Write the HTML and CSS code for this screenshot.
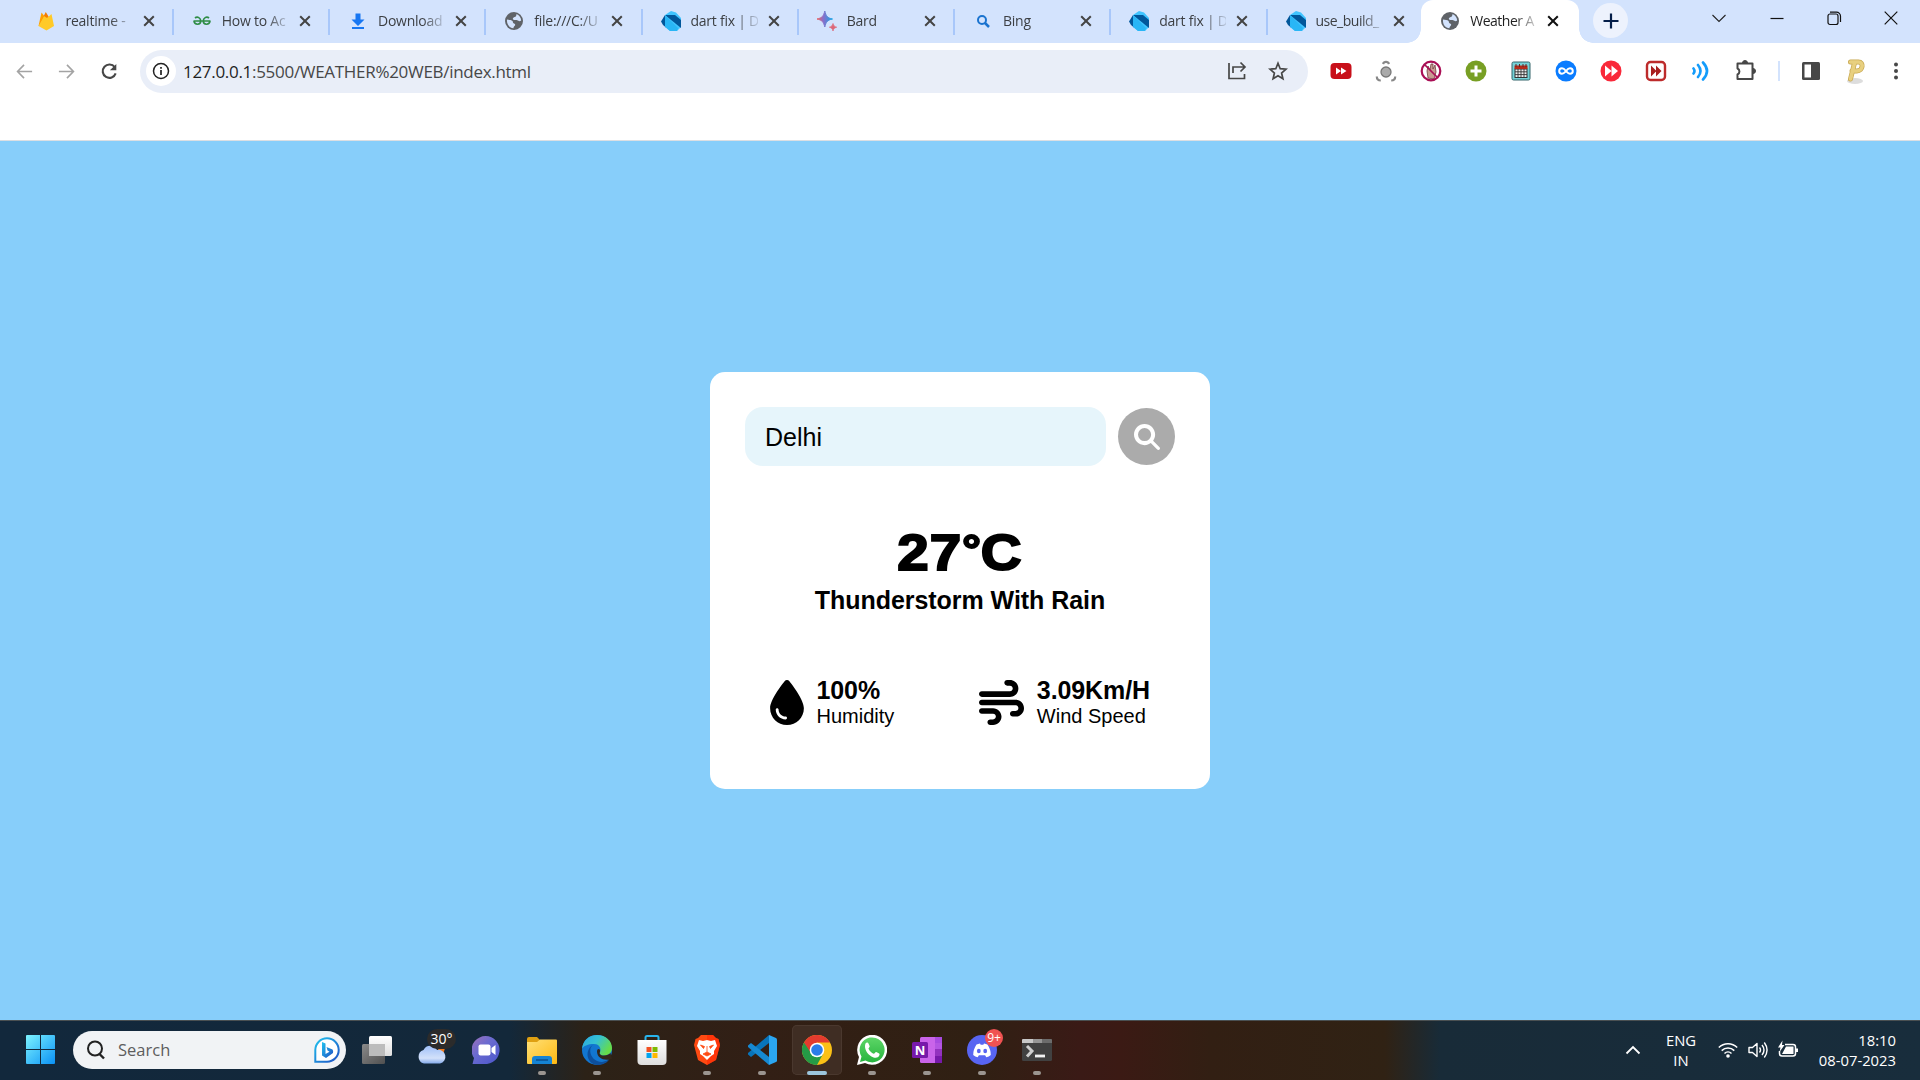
FILE: index.html
```html
<!DOCTYPE html>
<html lang="en">
<head>
<meta charset="utf-8">
<title>Weather App</title>
<link rel="stylesheet" href="styles.css">
</head>
<body>
<svg class="defs" aria-hidden="true">
  <defs>
    <symbol id="close" viewBox="0 0 16 16"><path d="M3.200 3.200l9.600 9.600M12.800 3.200l-9.600 9.600" fill="none" stroke="currentColor" stroke-width="2"/></symbol>
    <symbol id="globe" viewBox="0 0 20 20"><circle cx="10" cy="10" r="9" fill="#5f6368"/><path d="M3 8.500c2 .6 4.500.2 5.500 1.500.8 1.200 0 2 1.500 2.500 1.500.4 1.500 1.500.5 2.500s-1 1.500-1 2.300C5.500 17 2.500 13.500 3 8.500zM12.500 3c2.500.8 4.500 3.500 4.700 6.500-1.500 1.200-2.700.5-4-.2-1.200-.7-3 .2-4-.8s.2-2.200 1.500-2.500c1.200-.3 1.800-1.400 1.800-3z" fill="#d3e3fd"/></symbol>
    <symbol id="dart" viewBox="0 0 20 20"><path d="M4 4l6-4 5 1.500 5 5.500v9l-4 4H9L4 16z" fill="#40c4ff"/><path d="M4 4L0 10.500 2 14l3 2.500z" fill="#01579b"/><path d="M4 4h10l6 5v8z" fill="#01579b"/><path d="M4 4l13 13-1 3H9l-5-4.500z" fill="#29b6f6"/></symbol>
    <linearGradient id="bard" x1="0" y1="0" x2="1" y2="0"><stop offset="0" stop-color="#f0645c"/><stop offset=".4" stop-color="#8a6ecb"/><stop offset="1" stop-color="#16a5e6"/></linearGradient>
    <linearGradient id="win" x1="0" y1="0" x2="1" y2="1"><stop offset="0" stop-color="#7df3ff"/><stop offset="1" stop-color="#0a91f5"/></linearGradient>
    <linearGradient id="bing" x1="0" y1="0" x2="1" y2="1"><stop offset="0" stop-color="#22c3ee"/><stop offset="1" stop-color="#1d4fc4"/></linearGradient>
    <linearGradient id="paper" x1="0" y1="0" x2="0" y2="1"><stop offset="0" stop-color="#fff"/><stop offset="1" stop-color="#dedede"/></linearGradient>
    <linearGradient id="pane" x1="0" y1="0" x2="1" y2="1"><stop offset="0" stop-color="#8a8a8a"/><stop offset="1" stop-color="#505050"/></linearGradient>
    <linearGradient id="cloud" x1="0" y1="0" x2="0" y2="1"><stop offset="0" stop-color="#9fbff8"/><stop offset=".7" stop-color="#d3e1fa"/><stop offset="1" stop-color="#85abec"/></linearGradient>
    <linearGradient id="chat" x1="0" y1="0" x2="1" y2="1"><stop offset="0" stop-color="#a070b8"/><stop offset=".4" stop-color="#6b6bd0"/><stop offset="1" stop-color="#4a56cc"/></linearGradient>
    <linearGradient id="folder" x1="0" y1="0" x2="1" y2="1"><stop offset="0" stop-color="#ffe077"/><stop offset="1" stop-color="#fdb912"/></linearGradient>
    <linearGradient id="edge" x1="0" y1="0" x2="1" y2=".5"><stop offset="0" stop-color="#2aa6e0"/><stop offset=".5" stop-color="#35c1d4"/><stop offset="1" stop-color="#66dc4a"/></linearGradient>
    <linearGradient id="green" x1="0" y1="0" x2="0" y2="1"><stop offset="0" stop-color="#5dd667"/><stop offset="1" stop-color="#27b43e"/></linearGradient>
  </defs>
</svg>

<header class="browser">
  <div class="tabstrip">
    <div class="tabs">
      <div class="tab"><svg class="favicon" viewBox="0 0 20 20"><path d="M2.500 15L5.500 1.500 9 6z" fill="#ffa000"/><path d="M2.500 15L9.800 1l3 5z" fill="#f57c00"/><path d="M2.500 15L8 5l3 2 4.500-4L18 15l-7.500 4.500z" fill="#ffca28"/></svg><span class="tab-title">realtime -</span><svg class="tab-close"><use href="#close"/></svg></div>
      <div class="tab"><svg class="favicon" viewBox="0 0 20 20"><path d="M1.500 10h17M3 7c2.500-2 5.700 0 5.700 3 0 4.300-6.200 4.300-6.700 0M17 7c-2.500-2-5.700 0-5.700 3 0 4.300 6.200 4.300 6.700 0" fill="none" stroke="#2f8d46" stroke-width="1.700"/></svg><span class="tab-title">How to Ac</span><svg class="tab-close"><use href="#close"/></svg></div>
      <div class="tab"><svg class="favicon" viewBox="0 0 20 20"><path d="M7.500 2.500h5v6h4L10 15 3.500 8.500h4zM4 16h12v2H4z" fill="#1877f2"/></svg><span class="tab-title">Download</span><svg class="tab-close"><use href="#close"/></svg></div>
      <div class="tab"><svg class="favicon"><use href="#globe"/></svg><span class="tab-title">file:///C:/U</span><svg class="tab-close"><use href="#close"/></svg></div>
      <div class="tab"><svg class="favicon"><use href="#dart"/></svg><span class="tab-title">dart fix | D</span><svg class="tab-close"><use href="#close"/></svg></div>
      <div class="tab"><svg class="favicon" viewBox="0 0 20 20"><path d="M7.800 0C9 5 10.500 7 15.500 8 10.500 9 9 11 7.800 16 6.600 11 5 9 0 8 5 7 6.600 5 7.800 0z" fill="url(#bard)" stroke="url(#bard)" stroke-width="1"/><path d="M16 12.500c.6 2.200 1.300 3 3.700 3.700-2.400.7-3.100 1.500-3.700 3.800-.6-2.300-1.300-3.100-3.700-3.800 2.400-.7 3.100-1.500 3.700-3.700z" fill="#dd6778" stroke="#dd6778" stroke-width=".7"/></svg><span class="tab-title">Bard</span><svg class="tab-close"><use href="#close"/></svg></div>
      <div class="tab"><svg class="favicon" viewBox="0 0 20 20"><circle cx="9" cy="9" r="4" fill="none" stroke="#1a73cf" stroke-width="2"/><path d="M12 12l4 4" stroke="#1a73cf" stroke-width="2.500"/></svg><span class="tab-title">Bing</span><svg class="tab-close"><use href="#close"/></svg></div>
      <div class="tab"><svg class="favicon"><use href="#dart"/></svg><span class="tab-title">dart fix | D</span><svg class="tab-close"><use href="#close"/></svg></div>
      <div class="tab last"><svg class="favicon"><use href="#dart"/></svg><span class="tab-title tight">use_build_</span><svg class="tab-close"><use href="#close"/></svg></div>
      <div class="tab active"><svg class="favicon"><use href="#globe"/></svg><span class="tab-title tight">Weather A</span><svg class="tab-close"><use href="#close"/></svg></div>
    </div>
    <div class="new-tab"><svg width="16" height="16" viewBox="0 0 16 16"><path d="M8 .5v15M.5 8h15" stroke="#041e49" stroke-width="2.200"/></svg></div>
    <div class="window-controls">
      <svg viewBox="0 0 16 16"><path d="M1.500 5L8 11.500 14.500 5" fill="none" stroke="#222" stroke-width="1.100"/></svg>
      <svg viewBox="0 0 16 16"><path d="M1.500 8.500h13" stroke="#111" stroke-width="1.200"/></svg>
      <svg viewBox="0 0 16 16"><rect x="2" y="4" width="10" height="10.500" rx="2" fill="none" stroke="#111" stroke-width="1.200"/><path d="M4 2.200h6.500a4 4 0 0 1 4 4V12" fill="none" stroke="#111" stroke-width="1.200"/></svg>
      <svg viewBox="0 0 16 16"><path d="M1.700 1.700l12.600 12.600M14.300 1.700L1.700 14.300" stroke="#111" stroke-width="1.200"/></svg>
    </div>
  </div>

  <div class="toolbar">
    <div class="nav">
      <svg viewBox="0 0 20 20"><path d="M18 10H3M9.500 3L2.700 10l6.800 7" fill="none" stroke="#a3a3a3" stroke-width="1.700"/></svg>
      <svg viewBox="0 0 20 20"><path d="M2 10h15M10.500 3l6.800 7-6.800 7" fill="none" stroke="#a3a3a3" stroke-width="1.700"/></svg>
      <svg viewBox="0 0 20 20"><path d="M15.500 5.500A7 7 0 1 0 16.500 12" fill="none" stroke="#474747" stroke-width="2.200"/><path d="M17.200 2v6.800h-6.800z" fill="#474747"/></svg>
    </div>
    <div class="omnibox">
      <div class="site-info"><svg width="18" height="18" viewBox="0 0 18 18"><circle cx="9" cy="9" r="7.500" fill="none" stroke="#222" stroke-width="1.500"/><path d="M9 8v5M9 5v1.700" stroke="#222" stroke-width="1.700"/></svg></div>
      <span class="url"><b>127.0.0.1</b>:5500/WEATHER%20WEB/index.html</span>
      <div class="omnibox-actions">
        <svg viewBox="0 0 20 20"><path d="M2 2v15.500h15.500V13M6 12V6h11M13.500 1.500L18 6l-4.500 4.500" fill="none" stroke="#474747" stroke-width="1.700"/></svg>
        <svg viewBox="0 0 20 20"><path d="M10 2.300l2.200 5.400 5.800.5-4.400 3.800 1.300 5.700L10 14.700l-4.900 3L6.400 12 2 8.200l5.800-.5z" fill="none" stroke="#474747" stroke-width="1.700"/></svg>
      </div>
    </div>
    <div class="extensions">
      <svg viewBox="0 0 22 22"><rect x=".5" y="3" width="21" height="16" rx="4" fill="#c8101a"/><path d="M6 7.500l5 3.500-5 3.500zM11 7.500l5.500 3.500-5.500 3.500z" fill="#fff"/></svg>
      <svg viewBox="0 0 22 22"><circle cx="11" cy="12" r="5" fill="#aaa" stroke="#777" stroke-width="1.300"/><path d="M8 4a3.200 3.200 0 0 1 6 0M1.800 16.500c0 3 2 4 4 4M20.200 16.500c0 3-2 4-4 4" fill="none" stroke="#888" stroke-width="2.200"/></svg>
      <svg viewBox="0 0 22 22"><path d="M8 18l-1-7 1-5 2 4 1-6 2 0 0 5 2-4 1 7-2 7z" fill="#c99b92" stroke="#704040" stroke-width=".8"/><circle cx="11" cy="11" r="9.300" fill="none" stroke="#a90f55" stroke-width="2.200"/><path d="M5 5l12 12" stroke="#a90f55" stroke-width="1.700"/></svg>
      <svg viewBox="0 0 22 22"><circle cx="11" cy="11" r="10.500" fill="#789f24"/><path d="M11 5.500v11M5.500 11h11" stroke="#fff" stroke-width="3"/></svg>
      <svg viewBox="0 0 22 22"><rect x="2" y="2" width="18" height="18" rx="1.500" fill="#74d3d8" stroke="#35656a" stroke-width="1"/><rect x="5" y="9" width="12" height="8.500" fill="#eee" stroke="#333" stroke-width="1"/><path d="M5 11.800h12M5 14.600h12M8 9v8M11 9v8M14 9v8" stroke="#333" stroke-width=".9"/><path d="M4.500 5.500h13v3.500h-13z" fill="#b62a18"/><path d="M6 4v3M9.500 4v3M13 4v3M16 4v3" stroke="#622" stroke-width="1"/></svg>
      <svg viewBox="0 0 22 22"><circle cx="11" cy="11" r="10.500" fill="#0a7cff"/><path d="M11 11C9 8.500 8 8.200 7 8.200a2.800 2.800 0 0 0 0 5.600c1 0 2-.3 4-2.800s3-2.800 4-2.800a2.800 2.800 0 0 1 0 5.600c-1 0-2-.3-4-2.800z" fill="none" stroke="#fff" stroke-width="2"/></svg>
      <svg viewBox="0 0 22 22"><circle cx="11" cy="11" r="10.500" fill="#f9293a"/><path d="M5 5.500L11.500 11 5 16.500zM11.500 5.500L18 11l-6.500 5.500z" fill="#fff"/></svg>
      <svg viewBox="0 0 22 22"><rect x="2" y="2" width="18" height="18" rx="3.500" fill="#fff" stroke="#bd2b2b" stroke-width="2.400"/><path d="M6 5.500l5.500 5.500L6 16.500zM11 5.500l5.500 5.500-5.500 5.500z" fill="#a81f1f"/></svg>
      <svg viewBox="0 0 22 22"><path d="M3.500 8.500q2 2.500 0 5M8 5q5 6 0 12M13 2.500q8 8.500 0 17" fill="none" stroke="#139cfb" stroke-width="2.600" stroke-linecap="round"/></svg>
      <svg viewBox="0 0 22 22"><path d="M2.500 3.500h15v15.500h-15v-4.500a3.300 3.300 0 0 0 0-6z" fill="none" stroke="#474747" stroke-width="2" stroke-linejoin="round"/><path d="M7.500 3a2.500 2.500 0 0 1 5 0zM18 8.500a2.300 2.300 0 0 1 0 5z" fill="#474747" stroke="#474747"/></svg>
    </div>
    <div class="divider"></div>
    <div class="profile">
      <svg viewBox="0 0 22 22"><rect x="2" y="2" width="18" height="18" rx="1.500" fill="#474747"/><path d="M4.500 4.500h6.500v13H4.500z" fill="#fff"/></svg>
      <svg class="avatar" viewBox="0 0 22 28"><ellipse cx="11" cy="24" rx="8" ry="3" fill="#ddd"/><path d="M6.500 5h8c5.500 0 4.500 9-1.500 9H8M10.500 6L6.500 22" fill="none" stroke="#c8a850" stroke-width="5" stroke-linecap="round"/><path d="M6.500 5h8c5.500 0 4.500 9-1.500 9H8M10.500 6L6.500 22" fill="none" stroke="#e8d080" stroke-width="3.500" stroke-linecap="round"/></svg>
      <svg viewBox="0 0 22 22"><circle cx="11" cy="4.500" r="2" fill="#474747"/><circle cx="11" cy="11" r="2" fill="#474747"/><circle cx="11" cy="17.500" r="2" fill="#474747"/></svg>
    </div>
  </div>
  <div class="bookmarks"></div>
</header>

<main class="page">
  <section class="card">
    <div class="search-row">
      <div class="city-input">Delhi</div>
      <div class="search-button"><svg width="26" height="26" viewBox="0 0 512 512"><path fill="#fff" d="M416 208c0 45.900-14.900 88.300-40 122.700L502.600 457.400c12.500 12.500 12.500 32.800 0 45.300s-32.800 12.500-45.300 0L330.700 376c-34.400 25.200-76.800 40-122.700 40C93.100 416 0 322.900 0 208S93.100 0 208 0S416 93.100 416 208zM208 337a129 129 0 1 0 0-258 129 129 0 1 0 0 258z"/></svg></div>
    </div>
    <div class="temperature">27<span class="degree">°</span>C</div>
    <div class="description">Thunderstorm With Rain</div>
    <div class="details">
      <div class="detail">
        <svg class="drop" viewBox="0 0 384 512"><path d="M192 512C86 512 0 426 0 320C0 228.800 130.200 57.700 166.600 11.700C172.600 4.200 181.500 0 191.100 0h1.800c9.600 0 18.500 4.200 24.500 11.700C253.800 57.700 384 228.800 384 320c0 106-86 192-192 192zM96 336c0-8.800-7.200-16-16-16s-16 7.200-16 16c0 61.900 50.100 112 112 112c8.800 0 16-7.200 16-16s-7.200-16-16-16c-44.200 0-80-35.800-80-80z"/></svg>
        <div><div class="value">100%</div><div class="label">Humidity</div></div>
      </div>
      <div class="detail">
        <svg class="wind" viewBox="0 0 512 512"><path d="M288 32c0 17.700 14.300 32 32 32h32c17.700 0 32 14.300 32 32s-14.300 32-32 32H32c-17.700 0-32 14.300-32 32s14.300 32 32 32H352c53 0 96-43 96-96s-43-96-96-96H320c-17.700 0-32 14.300-32 32zm64 352c0 17.700 14.300 32 32 32h32c53 0 96-43 96-96s-43-96-96-96H32c-17.700 0-32 14.300-32 32s14.300 32 32 32H416c17.700 0 32 14.300 32 32s-14.300 32-32 32H384c-17.700 0-32 14.300-32 32zM128 512h32c53 0 96-43 96-96s-43-96-96-96H32c-17.700 0-32 14.300-32 32s14.300 32 32 32H160c17.700 0 32 14.300 32 32s-14.300 32-32 32H128c-17.700 0-32 14.300-32 32s14.300 32 32 32z"/></svg>
        <div><div class="value">3.09Km/H</div><div class="label">Wind Speed</div></div>
      </div>
    </div>
  </section>
</main>

<footer class="taskbar">
  <div class="start"><svg width="29" height="29" viewBox="0 0 29 29"><path d="M0 1q0-1 1-1h13v14H0zM15 0h13q1 0 1 1v13H15zM0 15h14v14H1q-1 0-1-1zM15 15h14v13q0 1-1 1H15z" fill="url(#win)"/></svg></div>
  <div class="search">
    <svg width="20" height="20" viewBox="0 0 20 20"><circle cx="9" cy="8.500" r="7" fill="none" stroke="#222" stroke-width="2"/><path d="M13.500 14l4.500 4.500" stroke="#222" stroke-width="2.400"/></svg>
    <span>Search</span>
    <svg class="bing" width="26" height="26" viewBox="0 0 26 26"><path d="M1.300 13A11.700 11.700 0 1 1 13 24.700H1.300z" fill="#fff" stroke="url(#bing)" stroke-width="2"/><path d="M8 5l3.500 1.500V17l4-2.200-2-1.300-1-3.500 6 2.500q1 1 .5 3.500L12 21l-4-2.500z" fill="url(#bing)"/></svg>
  </div>
  <div class="apps">
    <div class="app"><svg viewBox="0 0 30 30"><rect x="0" y="9" width="23" height="20" rx="1.500" fill="url(#pane)"/><rect x="7" y="1" width="23" height="20" rx="1.500" fill="url(#paper)"/><path d="M7 9h16v12H7z" fill="#bcbcbc"/></svg></div>
    <div class="app"><svg viewBox="0 0 30 30"><path d="M20 13h8l-2 7z" fill="#f07a1c"/><path d="M7 28.500a7 7 0 0 1-.5-13.500A7.500 7.500 0 0 1 20 15a6.800 6.800 0 0 1 3 13.500z" fill="url(#cloud)"/></svg><span class="badge temp">30°</span></div>
    <div class="app"><svg viewBox="0 0 30 30"><path d="M.5 29l1.500-6A14 14 0 1 1 15 29z" fill="url(#chat)"/><rect x="6.500" y="9.500" width="12" height="11" rx="2" fill="#fff"/><path d="M19.500 13l4-3v10l-4-3z" fill="#fff"/></svg></div>
    <div class="app running"><svg viewBox="0 0 30 30"><path d="M0 4q0-2 2-2h8l3 3v6H0z" fill="#dfa012"/><path d="M0 7h10l3-2.500h16q1 0 1 1V28q0 1-1 1H1q-1 0-1-1z" fill="url(#folder)"/><path d="M5 29v-5q0-3 3-3h14q3 0 3 3v5z" fill="#1583d3"/><path d="M9 25h12" stroke="#0b4f8f" stroke-width="1.500"/></svg></div>
    <div class="app running"><svg viewBox="0 0 30 30"><circle cx="15" cy="15" r="15" fill="#1276d0"/><path d="M0 14C1 5 7 0 15 0c9 0 15 6 15 13 0 5-4 7.500-8 7.500s-5-2-4-3.500 1-8-6-8C6 9 1 11 0 14z" fill="url(#edge)"/><path d="M12 9.500C5 12 8 27 20 27l7-2c-3 4-8 5-12 5C3 28 3 13 12 9.500z" fill="#0d4f9d"/><path d="M18 17c-1 1.500 0 3.500 4 3.500 3 0 5-1 6.500-2.500L30 24l-3 .5c-6 1-12-2-12-8 0-4 4-3 3 .5z" fill="#33271a"/></svg></div>
    <div class="app"><svg viewBox="0 0 30 30"><path d="M8.500 6V2.500q0-1.500 1.500-1.500h10q1.500 0 1.500 1.500V6" fill="none" stroke="#28b4ec" stroke-width="2"/><path d="M.5 5h29v21q0 4-4 4h-21q-4 0-4-4z" fill="url(#paper)"/><path d="M9.500 12h5v5h-5z" fill="#f25022"/><path d="M15.500 12h5v5h-5z" fill="#7fba00"/><path d="M9.500 18h5v5h-5z" fill="#00a4ef"/><path d="M15.500 18h5v5h-5z" fill="#ffb900"/></svg></div>
    <div class="app running"><svg viewBox="0 0 30 30"><path d="M9 0h12l3 3 2.500 1L28 10l-4 15-9 5-9-5L2 10l1.500-6L6 3z" fill="#ff4a12"/><path d="M15 0h6l3 3 2.500 1L28 10l-4 15-9 5z" fill="#ff1f00" opacity=".5"/><path d="M7 5l4 1 4-1 4 1 4-1 2 6-3 5 0 3-3 2-4 4-4-4-3-2 0-3-3-5z" fill="#fff"/><path d="M8.500 10l4 1.500-1 2zM21.500 10l-4 1.500 1 2zM15 11v6M11 19l4 2 4-2-4-2z" fill="#ff4a12" stroke="#ff4a12" stroke-width=".8"/></svg></div>
    <div class="app running"><svg viewBox="0 0 30 30"><path d="M22 8L4 22l-3-2.500V18l21-18z" fill="#0874ba"/><path d="M22 22L4 8 1 10.500V12l21 18z" fill="#1689d2"/><path d="M22 0l7 3q1 .5 1 1.500v21q0 1-1 1.500l-7 3z" fill="#2ba6f1"/></svg></div>
    <div class="app running current"><svg viewBox="0 0 30 30"><circle cx="15" cy="15" r="15" fill="#fbc116"/><path d="M15 15L2 7.500A15 15 0 0 0 15 30l6-11z" fill="#259b46"/><path d="M2 7.500A15 15 0 0 1 28 7.500H15l-7 9z" fill="#e33b2e"/><circle cx="15" cy="15" r="7.300" fill="#fff"/><circle cx="15" cy="15" r="5.800" fill="#2b7de9"/></svg></div>
    <div class="app running"><svg viewBox="0 0 30 30"><path d="M0 30l2-8A15 15 0 1 1 8 28z" fill="#fff"/><path d="M3 27l1.500-5.500A12.500 12.500 0 1 1 8.500 25.500z" fill="url(#green)"/><path d="M8.500 8.500c1-1.500 2.500-1.500 3 0l1.200 2.800c.3.700-1.400 2-1.200 2.400 1.200 2.500 3 4 5.200 5 .6.300 1.700-2 2.500-1.700l3 1.500c1 .6 0 3-1.500 3.800-5 2.500-15-6-12.200-13.800z" fill="#fff"/></svg></div>
    <div class="app running"><svg viewBox="0 0 30 30"><rect x="8" y="2" width="22" height="26" rx="1.500" fill="#ca64ea"/><path d="M23 2h7v6h-7z" fill="#a94be0"/><path d="M23 8h7v7h-7z" fill="#b455e2"/><path d="M23 14h7v7h-7z" fill="#9332bf"/><path d="M23 21h7v7h-7z" fill="#7719aa"/><rect x="0" y="7" width="16" height="16" rx="1.500" fill="#7719aa"/><text x="8" y="20" text-anchor="middle" fill="#fff" font-family="Open Sans, sans-serif" font-weight="700" font-size="13">N</text></svg></div>
    <div class="app running"><svg viewBox="0 0 30 30"><circle cx="15" cy="15" r="15" fill="#5865f2"/><path d="M9.500 9.500L13 8.500l.7 1.300h2.600l.7-1.300 3.500 1Q24 15 23.800 20q-2 1.700-4.500 2.200l-1.200-2h-6.200l-1.200 2Q8.200 21.700 6.200 20 6 15 9.500 9.500z" fill="#fff"/><ellipse cx="11.800" cy="16" rx="1.900" ry="2.200" fill="#5865f2"/><ellipse cx="18.200" cy="16" rx="1.900" ry="2.200" fill="#5865f2"/></svg><span class="badge count">9+</span></div>
    <div class="app running"><svg viewBox="0 0 30 30"><rect x="0" y="4" width="30" height="22" rx="1.500" fill="#414141"/><path d="M0 8V5q0-1 1-1h10v4z" fill="#c8c8c8"/><path d="M11 4h9v4h-9z" fill="#969696"/><path d="M20 4h9q1 0 1 1v3H20z" fill="#6c6c6c"/><path d="M5 11l5 5-5 5.500" fill="none" stroke="#cfcfcf" stroke-width="3"/><path d="M13 21h10" stroke="#f2f2f2" stroke-width="2.800"/></svg></div>
  </div>
  <div class="tray">
    <svg class="chevron" viewBox="0 0 16 16"><path d="M1.500 11.500L8 5l6.500 6.500" fill="none" stroke="#fff" stroke-width="1.800"/></svg>
    <div class="lang"><span>ENG</span><span>IN</span></div>
    <div class="status">
      <svg viewBox="0 0 20 20"><path d="M.8 7.500a13 13 0 0 1 18.400 0M3.700 10.600a9 9 0 0 1 12.600 0M6.500 13.500a5 5 0 0 1 7 0" fill="none" stroke="#fff" stroke-width="1.500"/><circle cx="10" cy="16" r="1.800" fill="#fff"/></svg>
      <svg viewBox="0 0 20 20"><path d="M1 7.500h3.500L9 3.500v13l-4.500-4H1z" fill="none" stroke="#fff" stroke-width="1.400" stroke-linejoin="round"/><path d="M11.500 7.500q2 2.500 0 5M14 5q4 5 0 10M16.300 2.500q5.500 7.500 0 15" fill="none" stroke="#fff" stroke-width="1.400"/></svg>
      <svg viewBox="0 0 20 20"><path d="M7 4.500h8q2.500 0 2.500 2.500v6.500q0 2.500-2.500 2.500H4q-2.500 0-2.500-2.500V11" fill="none" stroke="#fff" stroke-width="1.500"/><path d="M8 6.500h7.500v7.500H4zM18 8.500h2v3.500h-2z" fill="#fff"/><path d="M4.500.5L0 7.500h2.500L1.500 12 6.500 5H4z" fill="#fff"/></svg>
    </div>
    <div class="clock"><span>18:10</span><span>08-07-2023</span></div>
  </div>
</footer>
</body>
</html>
```
FILE: styles.css
```css
* { box-sizing: border-box; }
html, body { margin: 0; height: 100%; }
body {
  display: flex;
  flex-direction: column;
  width: 1920px;
  height: 1080px;
  overflow: hidden;
  font-family: "Liberation Sans", Arial, sans-serif;
  color: #000;
}
svg { display: block; flex: none; }
.defs { position: absolute; width: 0; height: 0; }

/* Browser chrome */
.browser {
  flex: none;
  height: 141px;
  background: #fff;
  border-bottom: 1px solid #dcdfe3;
  font-family: "Open Sans", "Noto Sans", sans-serif;
}
.tabstrip { display: flex; height: 43px; background: #d3e3fd; }
.tabs { display: flex; padding-left: 16.500px; }
.tab {
  position: relative;
  display: flex;
  align-items: center;
  width: 156.250px;
  height: 43px;
  padding-left: 19px;
  padding-bottom: 2px;
  color: #3c3f43;
}
.tab::after {
  content: "";
  position: absolute;
  right: -1px;
  top: 9px;
  width: 2px;
  height: 26px;
  background: #a8c7fa;
}
.tab.last::after { display: none; }
.favicon { width: 20px; height: 20px; }
.tab-title {
  width: 67px;
  margin: 0 8px 0 10px;
  font-size: 14px;
  letter-spacing: -.250px;
  white-space: nowrap;
  -webkit-mask-image: linear-gradient(90deg, #000 66%, rgba(0, 0, 0, .150) 100%);
  mask-image: linear-gradient(90deg, #000 66%, rgba(0, 0, 0, .150) 100%);
}
.tab-title.tight { letter-spacing: -.500px; }
.tab-close { width: 16px; height: 16px; color: #444; }
.tab.active {
  background: #fff;
  width: 158px;
  margin-left: -1.500px;
  border-radius: 12px 12px 0 0;
  color: #1f1f1f;
}
.tab.active .tab-close { color: #111; }
.tab.active::before, .tab.active::after {
  content: "";
  position: absolute;
  top: auto;
  bottom: 0;
  width: 14px;
  height: 14px;
}
.tab.active::before { left: -14px; background: radial-gradient(circle at 0 0, transparent 13.500px, #fff 14px); }
.tab.active::after { right: -14px; background: radial-gradient(circle at 100% 0, transparent 13.500px, #fff 14px); }
.new-tab {
  display: flex;
  align-items: center;
  justify-content: center;
  width: 35px;
  height: 35px;
  margin: 3px 0 0 14px;
  border-radius: 50%;
  background: #edf2fd;
}
.window-controls { display: flex; gap: 41.200px; margin: 10px 21px 0 auto; }
.window-controls svg { width: 16px; height: 16px; }

.toolbar { display: flex; align-items: center; height: 56px; }
.nav { display: flex; gap: 23.500px; padding-left: 14.500px; width: 140px; }
.nav svg { width: 19px; height: 19px; }
.omnibox {
  display: flex;
  align-items: center;
  width: 1168px;
  height: 43px;
  padding: 0 20px 0 6px;
  border-radius: 22px;
  background: #e9eef8;
}
.site-info {
  display: flex;
  align-items: center;
  justify-content: center;
  width: 30px;
  height: 30px;
  border-radius: 50%;
  background: #fff;
}
.url { margin-left: 7px; font-size: 17px; letter-spacing: -.300px; color: #474747; }
.url b { font-weight: 400; color: #1f1f1f; }
.omnibox-actions { display: flex; gap: 21px; margin-left: auto; }
.omnibox-actions svg { width: 20px; height: 20px; }
.extensions { display: flex; gap: 23px; margin-left: 22px; }
.extensions svg, .profile svg { width: 22px; height: 22px; }
.divider { width: 2px; height: 20px; margin: 0 20px 0 21px; background: #d3e3fd; }
.profile { display: flex; align-items: center; margin: 0 13px 0 auto; }
.profile svg:last-child { margin-left: 19px; }
.profile .avatar { width: 22px; height: 28px; margin-left: 22px; }

/* Weather page */
.page {
  flex: 1;
  display: flex;
  justify-content: center;
  align-items: flex-start;
  padding-top: 231px;
  background: #87cefa;
}
.card {
  width: 500px;
  height: 417px;
  padding: 35px;
  border-radius: 15px;
  background: #fff;
}
.search-row { display: flex; align-items: center; justify-content: space-between; }
.city-input {
  width: 361px;
  height: 59px;
  padding: 0 20px;
  border-radius: 18px;
  background: #e6f5fb;
  font-size: 25px;
  line-height: 60px;
}
.search-button {
  display: flex;
  align-items: center;
  justify-content: center;
  width: 57px;
  height: 57px;
  border-radius: 50%;
  background: #ababab;
}
.temperature {
  display: flex;
  justify-content: center;
  margin-top: 57px;
  height: 61px;
  font-size: 50px;
  line-height: 61px;
  font-weight: 700;
  letter-spacing: 1px;
  -webkit-text-stroke: 2px #000;
  transform: scaleX(1.130);
}
.degree { font-size: 41px; line-height: 55px; margin: 0 -1px 0 0; }
.description { height: 31px; line-height: 33px; text-align: center; font-size: 25px; font-weight: 700; letter-spacing: -.050px; }
.details { display: flex; justify-content: space-between; margin-top: 62px; padding: 0 25px 0 24.500px; }
.detail { display: flex; align-items: center; gap: 13px; }
.drop { width: 34px; height: 45px; }
.wind { width: 45px; height: 45px; }
.value { font-size: 25px; line-height: 27px; font-weight: 700; letter-spacing: -.100px; }
.label { font-size: 20px; line-height: 24px; }

/* Taskbar */
.taskbar {
  flex: none;
  display: flex;
  align-items: center;
  height: 60px;
  padding: 0 24px 2px 26px;
  border-top: 1px solid #4a5052;
  background: linear-gradient(90deg, #12283c 0, #13283a 510px, #2c2217 585px, #321f15 760px, #302013 980px, #3a1a16 1080px, #3b1a14 1120px, #321f13 1210px, #302214 1385px, #182b38 1440px, #182d3c 100%);
  font-family: "Open Sans", "Noto Sans", sans-serif;
}
.start { width: 47px; }
.search {
  display: flex;
  align-items: center;
  width: 273px;
  height: 38px;
  padding: 0 6px 0 13px;
  border-radius: 19px;
  background: #f1f3f5;
  color: #5d5d5d;
  font-size: 16.500px;
}
.search span { margin-left: 12px; }
.search .bing { margin-left: auto; }
.apps { display: flex; gap: 5px; margin-left: 6px; }
.app {
  position: relative;
  display: flex;
  align-items: center;
  justify-content: center;
  width: 50px;
  height: 50px;
  border-radius: 5px;
}
.app svg { width: 30px; height: 30px; }
.running::after {
  content: "";
  position: absolute;
  bottom: 0;
  left: 21px;
  width: 8px;
  height: 4px;
  border-radius: 2px;
  background: #9b9590;
}
.current { background: #3f2d23; box-shadow: inset 0 0 0 1px #4a382e; }
.current::after { left: 15px; width: 20px; background: #9cc6dd; }
.badge { position: absolute; color: #fff; text-align: center; }
.temp { left: 20px; top: 4px; width: 29px; height: 20px; border-radius: 10px; background: #2b2b2b; font-size: 14px; line-height: 20px; }
.count { left: 28px; top: 4px; width: 18px; height: 18px; border-radius: 50%; background: #f05252; font-size: 12px; line-height: 18px; }
.tray { display: flex; align-items: center; margin-left: auto; color: #fff; font-size: 14.800px; }
.chevron { width: 16px; height: 16px; margin-right: 25px; }
.lang, .clock { display: flex; flex-direction: column; line-height: 20px; }
.lang { width: 30px; align-items: center; }
.clock { width: 90px; align-items: flex-end; }
.status { display: flex; gap: 10px; margin: 0 8px 0 22px; }
.status svg { width: 20px; height: 20px; }
```
